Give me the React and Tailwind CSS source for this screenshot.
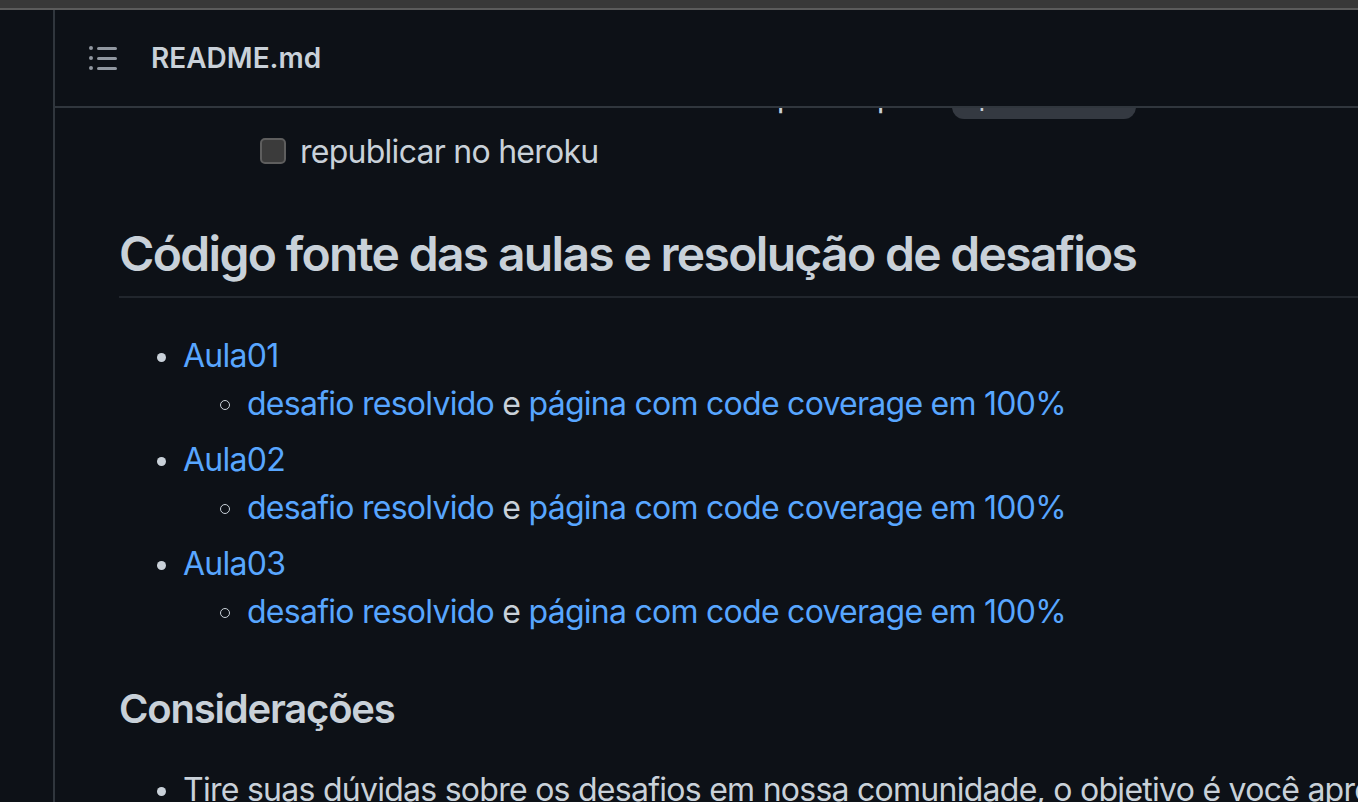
import React from "react";

const font = "font-['Inter','Noto_Sans',sans-serif]";

const ListIcon = () => (
  <svg width="32" height="32" viewBox="0 0 16 16" fill="#9198a1">
    <path d="M5.75 2.5h8.5a.75.75 0 0 1 0 1.5h-8.5a.75.75 0 0 1 0-1.5Zm0 5h8.5a.75.75 0 0 1 0 1.5h-8.5a.75.75 0 0 1 0-1.5Zm0 5h8.5a.75.75 0 0 1 0 1.5h-8.5a.75.75 0 0 1 0-1.5ZM2 14a1 1 0 1 1 0-2 1 1 0 0 1 0 2Zm1-6a1 1 0 1 1-2 0 1 1 0 0 1 2 0ZM2 4a1 1 0 1 1 0-2 1 1 0 0 1 0 2Z" />
  </svg>
);

const Disc = () => (
  <span className="w-[64px] shrink-0 flex justify-end pr-[17px] pt-[21px]">
    <span className="w-[9px] h-[9px] rounded-full bg-[#c9d1d9]" />
  </span>
);

const Circle = () => (
  <span className="w-[64px] shrink-0 flex justify-end pr-[17px] pt-[20px]">
    <span className="w-[10px] h-[10px] rounded-full border-[1.5px] border-[#c9d1d9]" />
  </span>
);

const Link = ({ children }) => <a className="text-[#58a6ff]">{children}</a>;

const lessons = ["Aula01", "Aula02", "Aula03"];

export default function App() {
  return (
    <div className={`w-[1358px] h-[802px] overflow-hidden bg-[#0d1117] flex flex-col ${font}`}>
      <div className="h-[10px] shrink-0 bg-[#383838] border-b-2 border-[#5b5b5b]" />
      <div className="flex flex-1 min-h-0">
        <div className="w-[55px] shrink-0 border-r-2 border-[#30363d]" />
        <div className="flex-1 min-w-0 flex flex-col">
          <div className="h-[98px] shrink-0 border-b-2 border-[#30363d] flex items-center pl-[32px] gap-[32px]">
            <ListIcon />
            <span className="text-[28px] font-semibold text-[#c9d1d9]">README.md</span>
          </div>

          <div className="flex-1 min-h-0 overflow-hidden pl-[64px] text-[32px] leading-[48px] tracking-[-0.023em] text-[#c9d1d9]">
            <div className="-mt-[36px]">
              <ul className="pl-[141px]">
                <li className="flex items-center gap-[14px] whitespace-nowrap">
                  <span className="w-[26px] h-[26px] shrink-0" />
                  <span>
                    mudar comando start no Heroku para o prod{" "}
                    <code className="inline-block w-[184px] px-[10px] py-[5px] rounded-[12px] bg-[#343941] text-[27px] leading-[32px] tracking-normal font-['Liberation_Mono',monospace] align-middle">
                      npm start
                    </code>
                  </span>
                </li>
                <li className="mt-[8px] flex items-center gap-[14px]">
                  <span className="w-[26px] h-[26px] shrink-0 -mt-[3px] rounded-[5px] bg-[#3b3b3b] border-2 border-[#5e5e5e]" />
                  <span>republicar no heroku</span>
                </li>
              </ul>

              <h2 className="mt-[48px] mb-[34px] pb-[12px] text-[48px] leading-[60px] font-semibold tracking-[-0.035em] border-b-2 border-[#21262d] whitespace-nowrap">
                Código fonte das aulas e resolução de desafios
              </h2>

              <ul>
                {lessons.map((l, i) => (
                  <li key={l} className={`flex ${i > 0 ? "mt-[8px]" : ""}`}>
                    <Disc />
                    <div>
                      <Link>{l}</Link>
                      <ul>
                        <li className="flex -ml-[64px] pl-[64px] whitespace-nowrap">
                          <Circle />
                          <span>
                            <Link>desafio resolvido</Link> e{" "}
                            <Link>página com code coverage em 100%</Link>
                          </span>
                        </li>
                      </ul>
                    </div>
                  </li>
                ))}
              </ul>

              <h3 className="mt-[48px] mb-[32px] text-[40px] leading-[50px] font-semibold tracking-[-0.03em]">
                Considerações
              </h3>

              <ul>
                <li className="flex whitespace-nowrap">
                  <Disc />
                  <span>
                    Tire suas dúvidas sobre os desafios em nossa comunidade, o objetivo é você aprender de forma colaborativa.
                  </span>
                </li>
              </ul>
            </div>
          </div>
        </div>
      </div>
    </div>
  );
}
